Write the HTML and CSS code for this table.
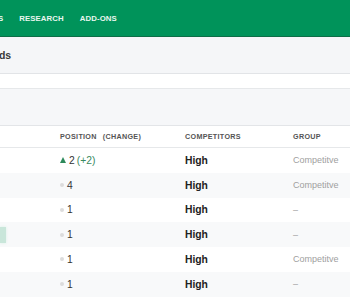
FILE: index.html
```html
<!DOCTYPE html>
<html lang="en">
<head>
  <meta charset="UTF-8" />
  <title>Rank Tracker</title>
  <link rel="stylesheet" href="styles.css">
</head>
<body>
  <div class="topbar">
    <nav class="nav">
      <a class="nav-item first">TOOLS</a>
      <a class="nav-item">RESEARCH</a>
      <a class="nav-item">ADD-ONS</a>
    </nav>
  </div>

  <div class="titlebar"><span class="title">Keywords</span></div>
  <div class="spacer"></div>
  <div class="filters"></div>

  <!-- keyword table -->
  <div class="table">
    <div class="row head">
      <div class="cell"></div>
      <div class="cell">POSITION <span class="sub">(CHANGE)</span></div>
      <div class="cell">COMPETITORS</div>
      <div class="cell">GROUP</div>
    </div>
    <div class="row">
      <div class="cell"></div>
      <div class="cell"><span class="up"></span>2 <span class="delta">(+2)</span></div>
      <div class="cell strong">High</div>
      <div class="cell muted">Competitve</div>
    </div>
    <div class="row alt">
      <div class="cell"></div>
      <div class="cell"><span class="dot"></span>4</div>
      <div class="cell strong">High</div>
      <div class="cell muted">Competitve</div>
    </div>
    <div class="row">
      <div class="cell"></div>
      <div class="cell"><span class="dot"></span>1</div>
      <div class="cell strong">High</div>
      <div class="cell muted">–</div>
    </div>
    <div class="row alt">
      <div class="cell"><span class="bar"></span></div>
      <div class="cell"><span class="dot"></span>1</div>
      <div class="cell strong">High</div>
      <div class="cell muted">–</div>
    </div>
    <div class="row">
      <div class="cell"></div>
      <div class="cell"><span class="dot"></span>1</div>
      <div class="cell strong">High</div>
      <div class="cell muted">Competitve</div>
    </div>
    <div class="row alt">
      <div class="cell"></div>
      <div class="cell"><span class="dot"></span>1</div>
      <div class="cell strong">High</div>
      <div class="cell muted">–</div>
    </div>
  </div>
</body>
</html>
```

FILE: styles.css
```css
html, body {
  overflow: hidden;
}

body {
  margin: 0;
  font-family: "Liberation Sans", Arial, sans-serif;
  background-color: #fff;
  color: #333;
}

.topbar {
  height: 36px;
  background-color: #00935a;
  border-bottom: 1px solid #0d6e47;
  display: flex;
  align-items: center;
  overflow: hidden;
}

.nav {
  display: flex;
  gap: 16px;
  margin-left: -24px;
  margin-top: 1px;
}

.nav-item {
  color: #e9f6ef;
  font-size: 7.8px;
  font-weight: bold;
  letter-spacing: 0.1px;
}

.titlebar {
  height: 36px;
  background-color: #f5f6f8;
  border-bottom: 1px solid #e2e4e7;
  display: flex;
  align-items: center;
  overflow: hidden;
}

.title {
  font-size: 10.5px;
  font-weight: bold;
  color: #3a3a3a;
  margin-left: -39px;
}

.spacer {
  height: 14px;
  background-color: #fff;
  border-bottom: 1px solid #e6e8ea;
}

.filters {
  height: 36px;
  background-color: #f6f7f9;
  border-bottom: 1px solid #e3e5e8;
}

.table {
  display: flex;
  flex-direction: column;
}

.row {
  display: grid;
  grid-template-columns: 60px 125px 108px 1fr;
  height: 24.75px;
  align-items: center;
}

.row.alt {
  background-color: #f8f9fa;
}

.row.head {
  height: 21px;
  border-bottom: 1px solid #e6e8ea;
  color: #555;
  letter-spacing: 0.3px;
}

.sub {
  margin-left: 6px;
}

.cell {
  display: flex;
  align-items: center;
  font-size: 10.3px;
  white-space: nowrap;
}

.head .cell {
  font-size: 7.2px;
  font-weight: bold;
}

.strong {
  font-weight: bold;
  color: #222;
}

.muted {
  color: #a0a0a0;
  font-size: 9px;
}

.up {
  width: 0;
  height: 0;
  border-left: 3.5px solid transparent;
  border-right: 3.5px solid transparent;
  border-bottom: 6px solid #2e8a5c;
  margin-right: 3px;
}

.delta {
  color: #3a8a60;
  margin-left: 2px;
}

.dot {
  width: 4px;
  height: 4px;
  border-radius: 50%;
  background-color: #dcdcdc;
  margin-right: 3px;
}

.bar {
  width: 6px;
  height: 16px;
  background-color: #c9e6da;
  box-shadow: 0 0 3px #d8f0e6;
}
```
